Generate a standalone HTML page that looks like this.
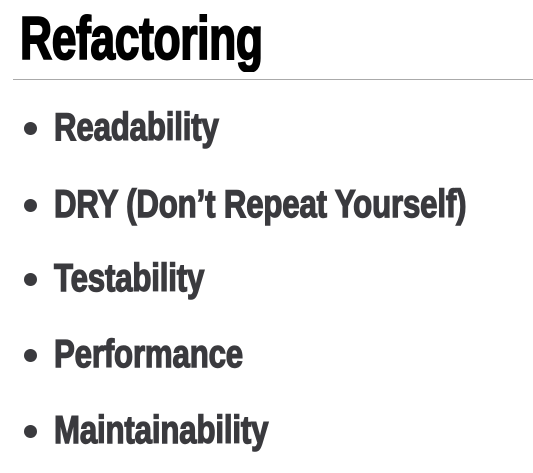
<!DOCTYPE html>
<html><head><style>
body{margin:0;width:533px;height:473px;background:#fff;position:relative;overflow:hidden;font-family:"Liberation Sans",Arial,sans-serif;font-weight:bold}
.t{position:absolute;white-space:nowrap;line-height:1;transform-origin:0 0}
.title{left:20px;top:9px;font-size:60px;color:#000;transform:scaleX(0.74);letter-spacing:-0.5px;-webkit-text-stroke:2px #000}
.rule{position:absolute;left:13px;right:0;top:79px;height:1px;background:#aaa}
.b{left:54px;font-size:39px;color:#3a3a3e;transform:scaleX(0.8);letter-spacing:-0.2px;-webkit-text-stroke:1.4px #3a3a3e}
.dot{position:absolute;left:24px;width:13px;height:13px;border-radius:50%;background:#3a3a3e}
</style></head><body>
<div class="t title">Refactoring</div>
<div class="rule"></div>
<div class="dot" style="top:122px"></div><div class="t b" style="top:108px">Readability</div>
<div class="dot" style="top:199px"></div><div class="t b" style="top:185px">DRY (Don’t Repeat Yourself)</div>
<div class="dot" style="top:273px"></div><div class="t b" style="top:259px">Testability</div>
<div class="dot" style="top:349px"></div><div class="t b" style="top:335px">Performance</div>
<div class="dot" style="top:425px"></div><div class="t b" style="top:411px">Maintainability</div>
</body></html>
